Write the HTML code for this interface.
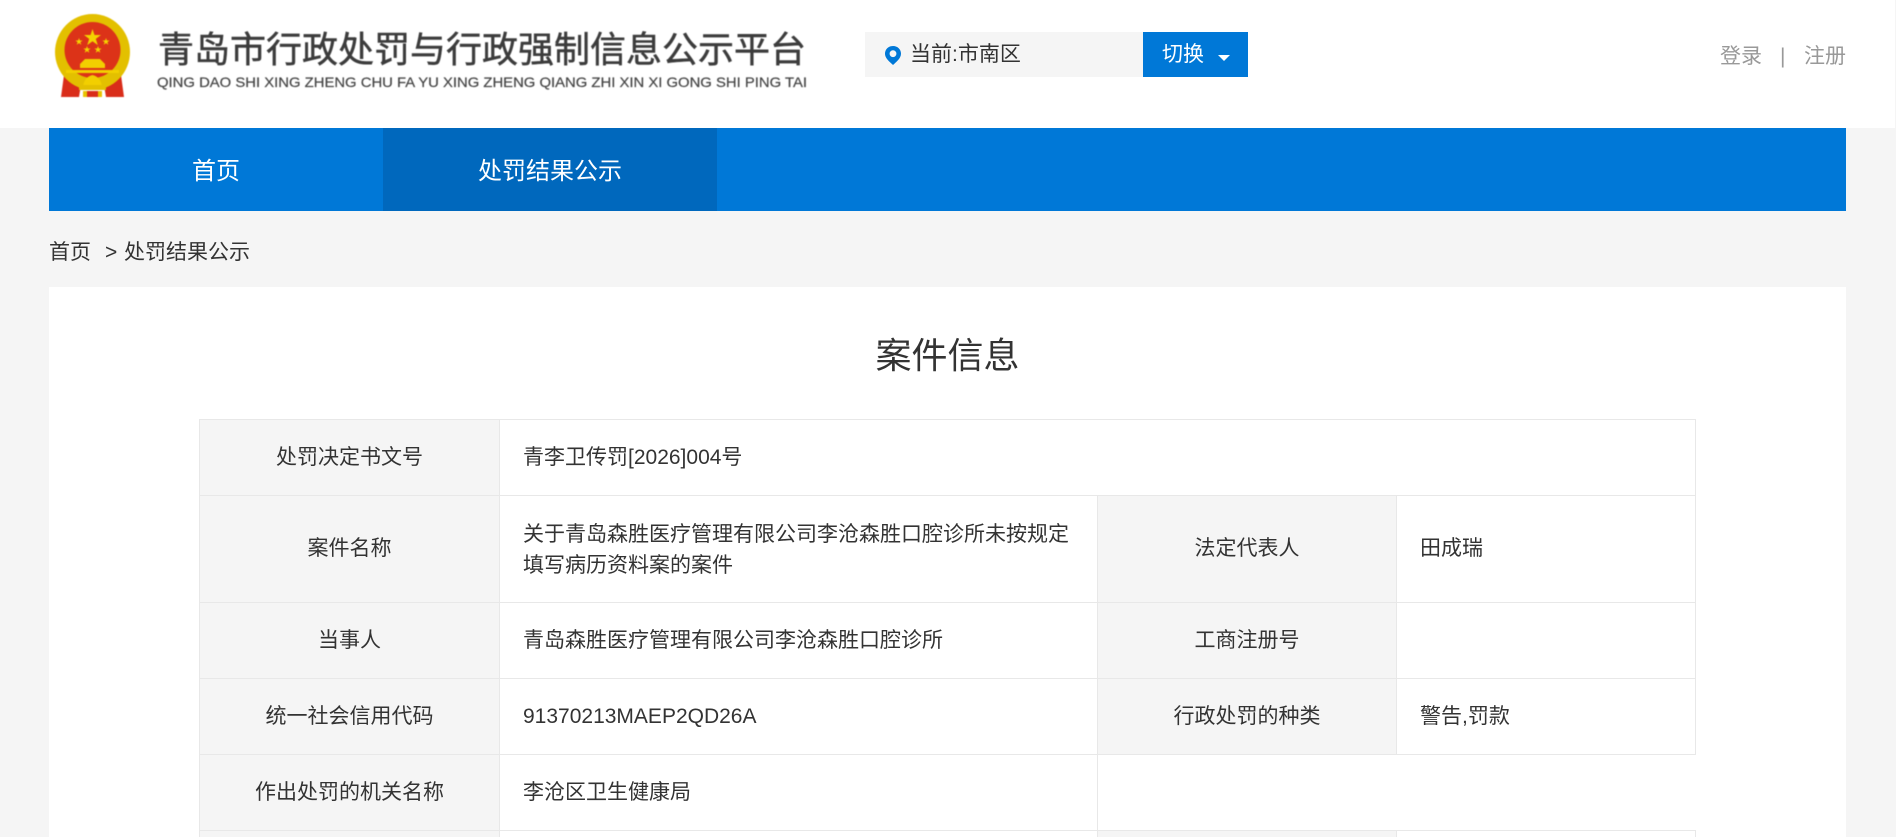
<!DOCTYPE html>
<html lang="zh-CN">
<head>
<meta charset="utf-8">
<title>案件信息</title>
<style>
*{box-sizing:border-box;margin:0;padding:0}
html,body{width:1896px;height:837px;overflow:hidden;background:#f5f5f5}
body{position:relative;font-family:"Liberation Sans","Noto Sans CJK SC",sans-serif;color:#333;font-size:21px}
.abs{position:absolute;white-space:nowrap}
#hd{position:absolute;left:0;top:0;width:1895px;height:128px;background:#fff}
#nav{position:absolute;left:49px;top:128px;width:1797px;height:83px;background:#0078d7}
#nav div{position:absolute;top:0;width:334px;height:83px;line-height:88px;text-align:center;color:#fff;font-size:24px}
#main{position:absolute;left:49px;top:287px;width:1797px;height:550px;background:#fff}
#tw{position:absolute;left:199px;top:419px;width:1498px;height:418px;overflow:hidden}
table{width:1496px;border-collapse:collapse;table-layout:fixed}
td{border:1px solid #e8e8e8;font-size:21px;line-height:31px;padding:0 24px 0 23px;vertical-align:middle;color:#333}
td.l{background:#f5f5f5;text-align:center;padding:0}
td.n{border:none;border-left:1px solid #e8e8e8}
</style>
</head>
<body>
<div id="hd"></div>

<svg class="abs" style="left:50px;top:11px;filter:blur(.6px)" width="85" height="92" viewBox="0 0 85 92">
  <path d="M14 64 L11 86 L29 86 L31 74Z M71 64 L74 86 L56 86 L54 74Z" fill="#d92d1a"/>
  <ellipse cx="42.500" cy="41" rx="37.500" ry="38" fill="#e3c000"/>
  <circle cx="42.500" cy="39" r="28" fill="#dc3318"/>
  <path d="M42.500 18 l2 6 h6.500 l-5.200 3.900 2 6.200 -5.300-3.800 -5.300 3.800 2-6.200 -5.200-3.900 h6.500z" fill="#f4d400"/>
  <path d="M29 27 l.9 2.500h2.700l-2.200 1.600 .9 2.600 -2.300-1.600 -2.300 1.600 .9-2.600 -2.200-1.600h2.700z" fill="#f4d400"/>
  <path d="M56 27 l.9 2.500h2.700l-2.200 1.600 .9 2.600 -2.300-1.600 -2.300 1.600 .9-2.600 -2.200-1.600h2.700z" fill="#f4d400"/>
  <path d="M37 35 l.9 2.500h2.700l-2.200 1.600 .9 2.600 -2.300-1.600 -2.300 1.600 .9-2.600 -2.200-1.600h2.700z" fill="#f4d400"/>
  <path d="M48 35 l.9 2.500h2.700l-2.200 1.600 .9 2.600 -2.300-1.600 -2.300 1.600 .9-2.600 -2.200-1.600h2.700z" fill="#f4d400"/>
  <path d="M35 48 H50 L55 53 V57 H30 V53Z" fill="#f2cf00"/>
  <path d="M16 59 H69 V62 H16Z" fill="#f2cf00"/>
  <path d="M33 76 Q34 66 42.500 64 Q51 66 52 76Z" fill="#f2cf00"/>
  <path d="M29 74 H56 V79 H29Z" fill="#e3c000"/>
  <path d="M33 80 H37 V86 H33Z M48 80 H52 V86 H48Z" fill="#e9c400"/>
  <path d="M37 80 H48 V86 H37Z" fill="#d92d1a"/>
</svg>

<div class="abs" style="left:158px;top:24px;font-size:36px;line-height:46px;color:#3c3c3c;-webkit-text-stroke:.5px #3c3c3c;filter:blur(.5px);font-family:'Noto Sans CJK SC',sans-serif">青岛市行政处罚与行政强制信息公示平台</div>
<svg class="abs" style="left:150px;top:71px;filter:blur(.4px)" width="670" height="22">
  <text x="7" y="16" font-family="Liberation Sans, sans-serif" font-size="14" fill="#444" stroke="#444" stroke-width=".2" textLength="650" lengthAdjust="spacingAndGlyphs">QING DAO SHI XING ZHENG CHU FA YU XING ZHENG QIANG ZHI XIN XI GONG SHI PING TAI</text>
</svg>

<div class="abs" style="left:865px;top:32px;width:278px;height:45px;background:#f5f5f5"></div>
<svg class="abs" style="left:884px;top:45px" width="18" height="21" viewBox="0 0 18 21">
  <path fill-rule="evenodd" d="M9 1 C4.400 1 1 4.400 1 8.700 C1 13.500 6.200 17.200 9 20 C11.800 17.200 17 13.500 17 8.700 C17 4.400 13.600 1 9 1Z M9 5.300 A3.400 3.400 0 1 1 9 12.100 A3.400 3.400 0 1 1 9 5.300Z" fill="#0078d7"/>
</svg>
<div class="abs" style="left:910px;top:32px;line-height:45px">当前:市南区</div>
<div class="abs" style="left:1143px;top:32px;width:105px;height:45px;background:#0078d7"></div>
<div class="abs" style="left:1162px;top:32px;line-height:45px;color:#fff">切换</div>
<svg class="abs" style="left:1217px;top:54px" width="14" height="8"><path d="M1 1 H13 L7 7Z" fill="#fff"/></svg>

<div class="abs" style="left:1720px;top:41px;line-height:31px;color:#999">登录</div>
<div class="abs" style="left:1780px;top:41px;line-height:31px;color:#999">|</div>
<div class="abs" style="left:1804px;top:41px;line-height:31px;color:#999">注册</div>

<div id="nav">
  <div style="left:0">首页</div>
  <div style="left:334px;background:#0068bd">处罚结果公示</div>
</div>

<div class="abs" style="left:49px;top:237px;line-height:31px;color:#333">首页</div>
<div class="abs" style="left:105px;top:237px;line-height:31px;color:#333">&gt;</div>
<div class="abs" style="left:124px;top:237px;line-height:31px;color:#333">处罚结果公示</div>

<div id="main"></div>
<div class="abs" style="left:49px;top:332px;width:1797px;text-align:center;font-size:36px;line-height:48px;color:#333">案件信息</div>

<div id="tw">
<table>
<colgroup><col style="width:300px"><col style="width:598px"><col style="width:299px"><col style="width:299px"></colgroup>
<tr style="height:76px"><td class="l">处罚决定书文号</td><td colspan="3">青李卫传罚[2026]004号</td></tr>
<tr style="height:107px"><td class="l" style="padding-bottom:2px">案件名称</td><td style="padding-top:2px">关于青岛森胜医疗管理有限公司李沧森胜口腔诊所未按规定填写病历资料案的案件</td><td class="l" style="padding-bottom:2px">法定代表人</td><td style="padding-bottom:2px">田成瑞</td></tr>
<tr style="height:76px"><td class="l">当事人</td><td>青岛森胜医疗管理有限公司李沧森胜口腔诊所</td><td class="l">工商注册号</td><td></td></tr>
<tr style="height:76px"><td class="l">统一社会信用代码</td><td>91370213MAEP2QD26A</td><td class="l">行政处罚的种类</td><td>警告,罚款</td></tr>
<tr style="height:76px"><td class="l">作出处罚的机关名称</td><td>李沧区卫生健康局</td><td class="n" colspan="2" style="border-top:1px solid #e8e8e8"></td></tr>
<tr style="height:76px"><td class="l"></td><td></td><td class="l"></td><td></td></tr>
</table>
</div>
</body>
</html>
